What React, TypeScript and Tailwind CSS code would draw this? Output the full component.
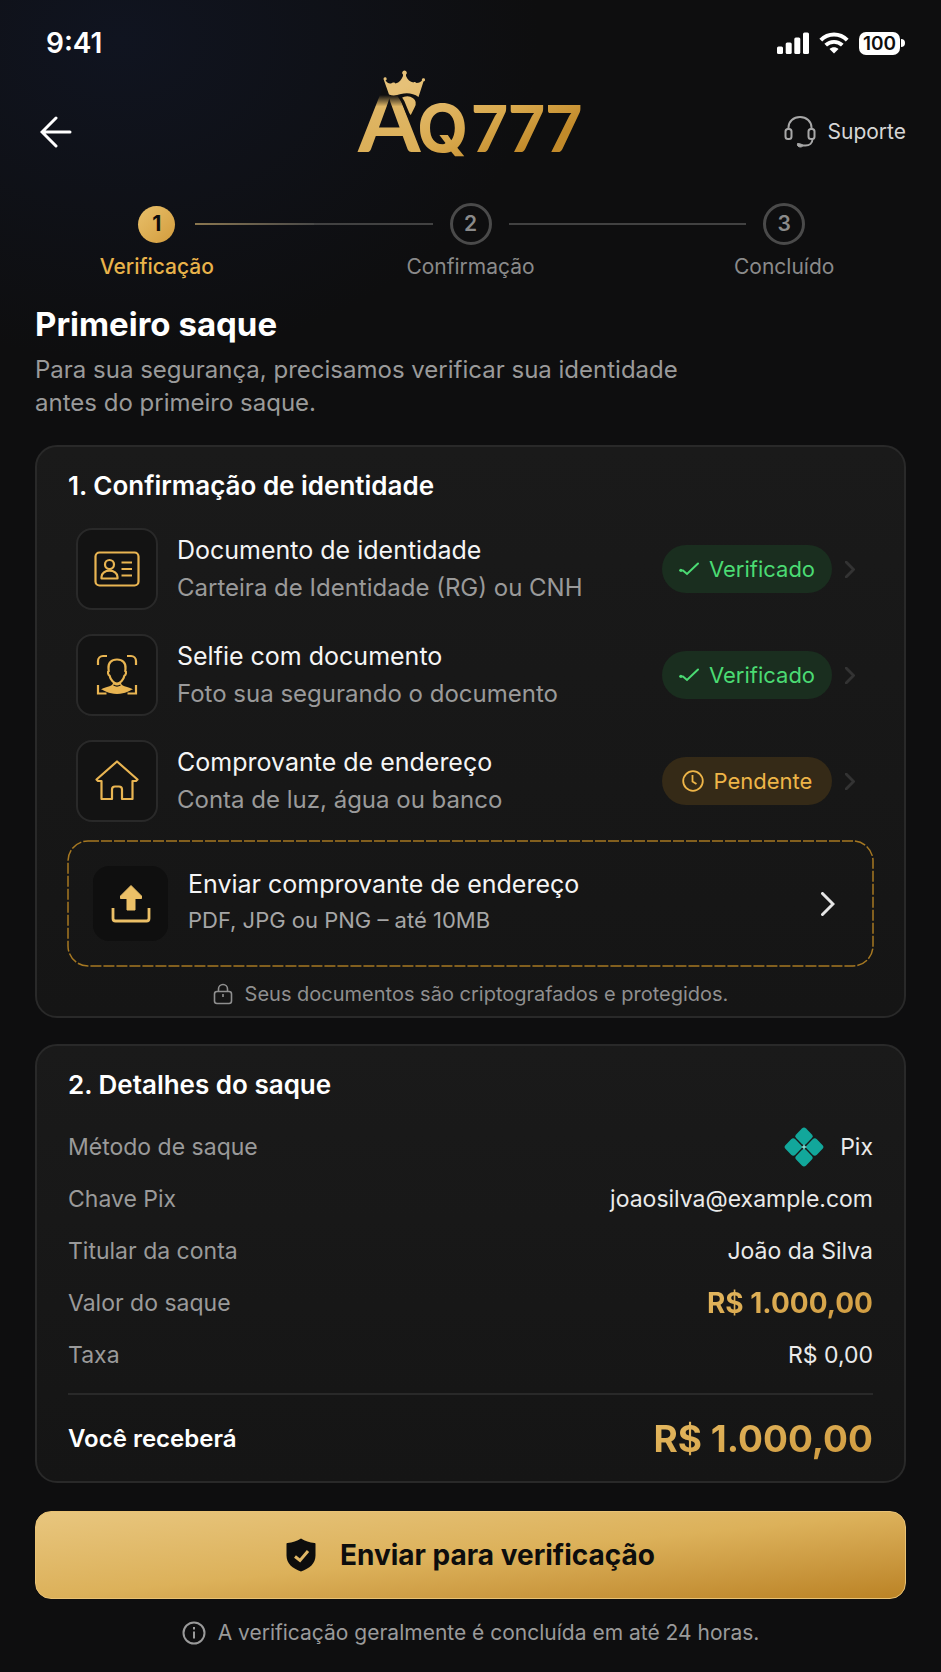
import React from "react";

type Status = "verified" | "pending";

interface DocumentItem {
  id: string;
  title: string;
  description: string;
  status: Status;
  icon: React.ReactNode;
}

interface IconProps {
  className?: string;
}

const IdCardIcon: React.FC<IconProps> = ({ className }) => (
  <svg className={className} viewBox="0 0 48 48" fill="none" stroke="currentColor" strokeWidth="2.200" aria-hidden="true">
    <rect x="2.500" y="7.500" width="43" height="33" rx="4" />
    <circle cx="16.500" cy="19.500" r="4.500" />
    <path d="M8.500 33.500v-1.500c0-4 3.800-6.300 8-6.300s8 2.300 8 6.300v1.500z" strokeLinejoin="round" />
    <path d="M28.500 17.500H39M28.500 24H39M28.500 30.500H39" />
  </svg>
);

const SelfieIcon: React.FC<IconProps> = ({ className }) => (
  <svg className={className} viewBox="0 0 48 48" fill="none" stroke="currentColor" strokeWidth="2.200" aria-hidden="true">
    <path d="M5 14V10a5 5 0 0 1 5-5h4M34 5h4a5 5 0 0 1 5 5v4M5 34v8.500h8.500M34.500 42.500H43V34" />
    <path d="M24 8.500c-5.800 0-9 3.700-8.500 9l.2 2.500c-1.300.7-.7 4 .9 4.700 1 4.500 4.400 7.800 7.400 7.800s6.400-3.300 7.400-7.800c1.600-.7 2.200-4 .9-4.700l.2-2.500c.5-5.300-2.700-9-8.500-9z" />
    <path
      d="M20 31.500c0 2-1 3-3.500 3.700-3.500 1-6.500 1.800-8.500 3.300 3.500.5 7 4.500 16 4.500s12.500-4 16-4.500c-2-1.500-5-2.300-8.500-3.300-2.500-.7-3.500-1.700-3.500-3.700-2.400 1.600-5.600 1.600-8 0z"
      fill="currentColor"
      stroke="none"
    />
    <path d="M20.500 34c2 1.200 5 1.200 7 0" stroke="#121212" strokeWidth="1.200" />
  </svg>
);

const HouseIcon: React.FC<IconProps> = ({ className }) => (
  <svg className={className} viewBox="0 0 48 48" fill="none" stroke="currentColor" strokeWidth="2.200" strokeLinejoin="round" aria-hidden="true">
    <path d="M24 4.500 3.500 22.500l1.500 1.500h3.500v18H19V32.500a3 3 0 0 1 3-3h4a3 3 0 0 1 3 3V42h10.500V24H43l1.500-1.500z" />
  </svg>
);

const UploadIcon: React.FC<IconProps> = ({ className }) => (
  <svg className={className} viewBox="0 0 40 40" fill="none" aria-hidden="true">
    <path
      d="M20 1.500 9.500 12v2.500h6.500V26h8V14.500h6.500V12z"
      fill="currentColor"
      stroke="currentColor"
      strokeLinejoin="round"
    />
    <path d="M2 24v10.500a2.500 2.500 0 0 0 2.500 2.500h31a2.500 2.500 0 0 0 2.500-2.500V24" stroke="currentColor" strokeWidth="2.800" />
  </svg>
);

const HeadsetIcon: React.FC<IconProps> = ({ className }) => (
  <svg className={className} viewBox="0 0 32 34" fill="none" stroke="currentColor" strokeWidth="2" aria-hidden="true">
    <path d="M4.500 14v-1.500C4.500 6.500 9.500 2 16 2s11.500 4.500 11.500 10.500V14" />
    <rect x="1.500" y="14" width="6" height="10" rx="2.500" />
    <rect x="24.500" y="14" width="6" height="10" rx="2.500" />
    <path d="M28.500 24c0 4-3 6.500-7 6.500h-3.500" />
    <path d="M13.500 28.500c1.800 0 3 .5 5 1.200 1 1-.5 2.300-2 2.300-2.500 0-3.500-1.500-3-3.500z" fill="currentColor" strokeWidth="1" />
  </svg>
);

const LockIcon: React.FC<IconProps> = ({ className }) => (
  <svg className={className} viewBox="0 0 20 22" fill="none" stroke="currentColor" strokeWidth="1.600" aria-hidden="true">
    <rect x="1.500" y="8.500" width="17" height="12" rx="2.500" />
    <path d="M5.500 8.500V6a4.500 4.500 0 0 1 9 0v2.500M10 11v3" />
  </svg>
);

const ChevronIcon: React.FC<IconProps> = ({ className }) => (
  <svg className={className} viewBox="0 0 14 24" fill="none" stroke="currentColor" strokeWidth="3" aria-hidden="true">
    <path d="M1.500 1.500 12 12 1.500 22.500" strokeLinecap="round" />
  </svg>
);

const CheckIcon: React.FC<IconProps> = ({ className }) => (
  <svg className={className} viewBox="0 0 20 14" fill="none" stroke="currentColor" strokeWidth="2" strokeLinecap="round" aria-hidden="true">
    <path d="M1.500 8.500h2.500L8 12 19 1.500" />
    <circle cx="1.800" cy="8.200" r="1.500" fill="currentColor" stroke="none" />
  </svg>
);

const ClockIcon: React.FC<IconProps> = ({ className }) => (
  <svg className={className} viewBox="0 0 22 22" fill="none" stroke="currentColor" strokeWidth="1.800" aria-hidden="true">
    <circle cx="11" cy="11" r="9.800" />
    <path d="M10.500 5v6.500l4 2.500" />
  </svg>
);

const PixIcon: React.FC<IconProps> = ({ className }) => (
  <svg className={className} viewBox="0 0 40 40" fill="#12a79b" aria-hidden="true">
    <g transform="rotate(45 20 20)">
      <rect x="5.500" y="5.500" width="13.800" height="13.800" rx="3" />
      <rect x="20.700" y="5.500" width="13.800" height="13.800" rx="3" />
      <rect x="5.500" y="20.700" width="13.800" height="13.800" rx="3" />
      <rect x="20.700" y="20.700" width="13.800" height="13.800" rx="3" />
    </g>
    <path d="m20 17 1 2 2 1-2 1-1 2-1-2-2-1 2-1z" fill="#7fd6cd" />
  </svg>
);

const ShieldIcon: React.FC<IconProps> = ({ className }) => (
  <svg className={className} viewBox="0 0 30 34" fill="none" aria-hidden="true">
    <path d="M15 .5c4 2.600 8.500 4 13.500 4.500 .6 0 1 .4 1 1v11.500c0 8-6 13-14.500 16C6.500 30.500.5 25.500.5 17.500V6c0-.6.4-1 1-1C6.500 4.500 11 3.100 15 .5z" fill="#0d0d0d" />
    <path d="m9 18.500 5 4 8-9.500" stroke="#e0b766" strokeWidth="3" />
  </svg>
);

const InfoIcon: React.FC<IconProps> = ({ className }) => (
  <svg className={className} viewBox="0 0 24 24" fill="none" stroke="currentColor" strokeWidth="2" aria-hidden="true">
    <circle cx="12" cy="12" r="10.500" />
    <path d="M12 6v2.500M12 10.500v7" />
  </svg>
);

const Logo: React.FC = () => (
  <svg className="h-[100px] w-[250px]" viewBox="-10 0 250 100" role="img" aria-label="AQ777">
    <defs>
      <linearGradient id="logo-gold" gradientUnits="userSpaceOnUse" x1="40" y1="20" x2="90" y2="120">
        <stop offset="0" stopColor="#e6c178" />
        <stop offset="0.600" stopColor="#d9a94d" />
        <stop offset="1" stopColor="#c28a2a" />
      </linearGradient>
      <linearGradient id="logo-letter" gradientUnits="userSpaceOnUse" x1="0" y1="25" x2="0" y2="82">
        <stop offset="0" stopColor="#0f0f10" />
        <stop offset="0.200" stopColor="#dfb665" />
        <stop offset="1" stopColor="#dbaf58" />
      </linearGradient>
    </defs>
    <text x="2" y="82" fill="url(#logo-letter)" fontFamily="Lato, sans-serif" fontWeight="700" fontSize="90">A</text>
    <g fill="url(#logo-gold)">
      <text x="61" y="82" fontFamily="Inter, sans-serif" fontWeight="700" fontSize="66">Q</text>
      <text x="115" y="82" fontFamily="Lato, sans-serif" fontWeight="900" fontSize="64">777</text>
    </g>
    <path d="M44 27c5-3 10-3 14 0 4 3 4 7 2 11l-5 10c-6-6-4-12-11-21z" fill="url(#logo-gold)" stroke="#0f0f10" strokeWidth="3" />
    <path
      d="M27.500 9a1.600 1.600 0 1 1 2 1.500c2 2.500 4 4 6.500 2.500 2-1 3 0 3.500.5 4-1 6-4 7.500-7.500v-1.500a2.200 2.200 0 1 1 3 0V6c1.500 3.500 4 6 7.500 6.500 1-1 2 0 3 .5 3 0 4-1 5.500-2.500a1.600 1.600 0 1 1 1.500 1L62.500 27c-5-4-12-4.500-17.500-3-5 1.500-8 2-12 .5z"
      fill="url(#logo-gold)"
    />
  </svg>
);

const StatusBar: React.FC = () => (
  <div className="flex h-[86px] items-center justify-between pl-[46px] pr-9">
    <span className="text-[28px] font-semibold text-white">9:41</span>
    <div className="flex items-center gap-2.5 text-white">
      <svg className="h-[22px] w-8" viewBox="0 0 32 22" fill="currentColor" aria-hidden="true">
        <rect x="0" y="14.500" width="6" height="7.500" rx="1.500" />
        <rect x="8.700" y="10.500" width="6" height="11.500" rx="1.500" />
        <rect x="17.300" y="5.500" width="6" height="16.500" rx="1.500" />
        <rect x="26" y="0.500" width="6" height="21.500" rx="1.500" />
      </svg>
      <svg className="h-[22px] w-[30px]" viewBox="0 0 30 22" fill="none" stroke="currentColor" aria-hidden="true">
        <path d="M1.800 8.200C9.200.7 20.800.7 28.200 8.200" strokeWidth="4" />
        <path d="M6.700 13.200c4.700-4.500 11.900-4.500 16.600 0" strokeWidth="3.800" />
        <path d="M15 21.500l-4.500-4.500c2.600-2.400 6.400-2.400 9 0z" fill="currentColor" stroke="none" />
      </svg>
      <div className="flex items-center gap-px">
        <span className="rounded-[7px] bg-white px-1 text-[19px] leading-[23px] font-semibold text-[#0e0e0f]">100</span>
        <span className="h-2 w-1 rounded-r-full bg-white" />
      </div>
    </div>
  </div>
);

const steps = [
  { label: "Verificação", active: true },
  { label: "Confirmação", active: false },
  { label: "Concluído", active: false },
];

const Stepper: React.FC = () => (
  <ol className="grid grid-cols-3">
    {steps.map((step, index) => (
      <li key={step.label} className="flex flex-col items-center gap-1">
        <div className="flex h-[42px] w-full items-center">
          <span className={`h-[2px] flex-1 ${index > 0 ? "bg-[#424242]" : ""}`} />
          <div className="flex w-[76px] justify-center">
            {step.active ? (
              <span className="flex size-[37px] items-center justify-center rounded-full bg-linear-to-br from-[#e8c06a] to-[#d39c3c] text-[21px] font-bold text-[#0d0d0d]">
                {index + 1}
              </span>
            ) : (
              <span className="flex size-[42px] items-center justify-center rounded-full border-3 border-[#4a4a4a] text-[21px] font-semibold text-[#8a8a8a]">
                {index + 1}
              </span>
            )}
          </div>
          <span
            className={`h-[2px] flex-1 ${index === 0 ? "bg-linear-to-r from-[#8b774f] to-[#4a4a48]" : index === 1 ? "bg-[#424242]" : ""
              }`}
          />
        </div>
        <span className={`text-[21px] leading-9 ${step.active ? "font-medium text-[#e9b34a]" : "text-[#8a8a8a]"}`}>
          {step.label}
        </span>
      </li>
    ))}
  </ol>
);

const documents: DocumentItem[] = [
  {
    id: "id",
    title: "Documento de identidade",
    description: "Carteira de Identidade (RG) ou CNH",
    status: "verified",
    icon: <IdCardIcon className="size-12" />,
  },
  {
    id: "selfie",
    title: "Selfie com documento",
    description: "Foto sua segurando o documento",
    status: "verified",
    icon: <SelfieIcon className="size-12" />,
  },
  {
    id: "address",
    title: "Comprovante de endereço",
    description: "Conta de luz, água ou banco",
    status: "pending",
    icon: <HouseIcon className="size-12" />,
  },
];

const StatusBadge: React.FC<{ status: Status }> = ({ status }) => {
  if (status === "verified") {
    return (
      <span className="flex h-12 w-[170px] items-center justify-center gap-2.5 rounded-full bg-[#1a2e1f] text-[22px] text-[#4bdb73]">
        <CheckIcon className="h-[14px] w-5" />
        Verificado
      </span>
    );
  }
  return (
    <span className="flex h-12 w-[170px] items-center justify-center gap-2.5 rounded-full bg-[#352a17] text-[22px] text-[#eeb548]">
      <ClockIcon className="size-[22px]" />
      Pendente
    </span>
  );
};

const DocumentRow: React.FC<{ item: DocumentItem }> = ({ item }) => (
  <li>
    <button type="button" className="flex w-full items-center pr-[18px] pl-2 text-left">
      <span className="flex size-[82px] items-center justify-center rounded-2xl border-2 border-[#292929] bg-[#131313] text-[#e9b552]">
        {item.icon}
      </span>
      <span className="ml-[19px] flex flex-1 flex-col">
        <span className="text-[25px] leading-[37px] text-[#f5f5f5]">{item.title}</span>
        <span className="text-[24px] leading-[37px] text-[#9a9a9a]">{item.description}</span>
      </span>
      <StatusBadge status={item.status} />
      <ChevronIcon className="ml-[13px] h-[17px] w-[10px] text-[#333333] stroke-4" />
    </button>
  </li>
);

const cardClass = "rounded-[22px] border-2 border-[#292929] bg-linear-to-b from-[#1a1a1a] to-[#151515] px-[31px]";

const IdentityCard: React.FC = () => (
  <section className={`mt-[26px] pb-0.5 ${cardClass}`}>
    <h2 className="pt-[19px] text-[26px] leading-10 font-semibold text-white">1. Confirmação de identidade</h2>
    <ul className="mt-[22px] flex flex-col gap-6">
      {documents.map((item) => (
        <DocumentRow key={item.id} item={item} />
      ))}
    </ul>
    <button type="button" className="relative mt-[19px] flex h-[125px] w-full items-center pr-[38px] pl-[25px] text-left">
      {/* border-dashed has no control over the dash length */}
      <svg className="absolute inset-0 size-full overflow-visible" fill="none" aria-hidden="true">
        <rect width="100%" height="100%" rx="20" stroke="#a67822" strokeWidth="1.500" strokeDasharray="11 2" />
      </svg>
      <span className="flex size-[75px] items-center justify-center rounded-2xl bg-[#0f0f0f] text-[#ecc067]">
        <UploadIcon className="size-10" />
      </span>
      <span className="ml-5 flex flex-1 flex-col pb-1">
        <span className="text-[25px] leading-9 text-[#f5f5f5]">Enviar comprovante de endereço</span>
        <span className="text-[22px] leading-9 text-[#a6a6a6]">PDF, JPG ou PNG – até 10MB</span>
      </span>
      <ChevronIcon className="h-6 w-[14px] text-[#e6e6e6]" />
    </button>
    <p className="mt-2 flex items-center justify-center gap-3 text-[20px] leading-10 text-[#8f8f8f]">
      <LockIcon className="h-[22px] w-5" />
      Seus documentos são criptografados e protegidos.
    </p>
  </section>
);

const goldText = "bg-linear-to-br from-[#e6bb63] to-[#cd973a] bg-clip-text font-bold text-transparent";

const DetailsCard: React.FC = () => (
  <section className={`mt-[26px] pb-4 ${cardClass}`}>
    <h2 className="pt-[19px] text-[26px] leading-10 font-semibold text-white">2. Detalhes do saque</h2>
    <dl className="mt-4 text-[23px] leading-[52px] text-[#eaeaea]">
      <div className="flex justify-between">
        <dt className="text-[#9a9a9a]">Método de saque</dt>
        <dd className="flex items-center gap-4">
          <PixIcon className="size-10" />
          Pix
        </dd>
      </div>
      <div className="flex justify-between">
        <dt className="text-[#9a9a9a]">Chave Pix</dt>
        <dd>joaosilva@example.com</dd>
      </div>
      <div className="flex justify-between">
        <dt className="text-[#9a9a9a]">Titular da conta</dt>
        <dd>João da Silva</dd>
      </div>
      <div className="flex justify-between">
        <dt className="text-[#9a9a9a]">Valor do saque</dt>
        <dd className={`text-[28px] ${goldText}`}>R$ 1.000,00</dd>
      </div>
      <div className="flex justify-between">
        <dt className="text-[#9a9a9a]">Taxa</dt>
        <dd>R$ 0,00</dd>
      </div>
      <div className="mt-3 flex items-center justify-between border-t-2 border-[#292929] pt-[18px]">
        <dt className="text-[24px] font-semibold text-white">Você receberá</dt>
        <dd className={`text-[37px] ${goldText}`}>R$ 1.000,00</dd>
      </div>
    </dl>
  </section>
);

const App: React.FC = () => {
  return (
    <div className="min-h-screen bg-[#0e0e0f] bg-[radial-gradient(ellipse_420px_320px_at_120px_40px,#101420,#0e0e0f)] font-['Inter',sans-serif]">
      <StatusBar />
      <header className="-mt-4 grid grid-cols-[1fr_auto_1fr] items-center px-[35px]">
        <button type="button" aria-label="Voltar" className="mt-6 justify-self-start pl-[5px] text-white">
          <svg className="size-8" viewBox="0 0 32 32" fill="none" stroke="currentColor" strokeWidth="3" strokeLinecap="round" aria-hidden="true">
            <path d="M16 2 2 16l14 14M3 16h27" />
          </svg>
        </button>
        <Logo />
        <a href="#suporte" className="mt-6 flex items-center gap-3 justify-self-end text-[21px] text-[#d6d6d6]">
          <HeadsetIcon className="h-[34px] w-8 text-[#a8a8a8]" />
          Suporte
        </a>
      </header>
      <div className="mt-[33px]">
        <Stepper />
      </div>
      <main className="px-[35px]">
        <h1 className="mt-4 text-[33px] leading-[46px] font-bold text-white">Primeiro saque</h1>
        <p className="mt-1.5 max-w-[700px] text-[24px] leading-[33px] text-[#9a9a9a]">
          Para sua segurança, precisamos verificar sua identidade antes do primeiro saque.
        </p>
        <IdentityCard />
        <DetailsCard />
        <button
          type="button"
          className="mt-7 flex h-[88px] w-full items-center justify-center gap-6 rounded-2xl border border-[#e9c274] bg-linear-to-br from-[#e8c67e] via-[#dcb15a] to-[#bb8324] text-[28px] font-bold text-[#0d0d0d]"
        >
          <ShieldIcon className="h-[34px] w-[30px]" />
          Enviar para verificação
        </button>
        <p className="mt-4 flex items-center justify-center gap-3 pb-4 text-[21px] leading-9 text-[#9a9a9a]">
          <InfoIcon className="size-6" />
          A verificação geralmente é concluída em até 24 horas.
        </p>
      </main>
    </div>
  );
};

export default App;
